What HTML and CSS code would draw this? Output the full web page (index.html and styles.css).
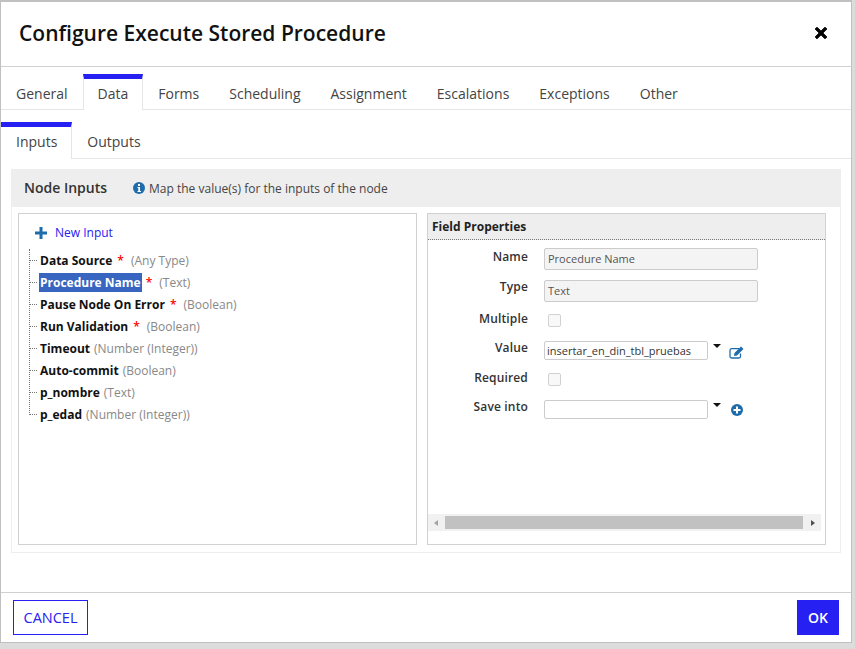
FILE: index.html
```html
<!DOCTYPE html>
<html lang="en">
<head>
<meta charset="utf-8">
<title>Configure Execute Stored Procedure</title>
<link rel="stylesheet" href="styles.css">
</head>
<body>
<div class="dialog">
  <header class="head">
    <h1>Configure Execute Stored Procedure</h1>
    <svg class="close" width="14" height="14" viewBox="0 0 14 14"><path d="M3 1.2 7 5.2 11 1.2 12.8 3 8.8 7 12.8 11 11 12.8 7 8.800 3 12.800 1.200 11 5.200 7 1.200 3Z" fill="#000" stroke="#000" stroke-linejoin="round"/></svg>
  </header>
  <nav class="tabs main">
    <span class="tab">General</span>
    <span class="tab active">Data</span>
    <span class="tab">Forms</span>
    <span class="tab">Scheduling</span>
    <span class="tab">Assignment</span>
    <span class="tab">Escalations</span>
    <span class="tab">Exceptions</span>
    <span class="tab">Other</span>
  </nav>
  <nav class="tabs sub">
    <span class="tab active">Inputs</span>
    <span class="tab">Outputs</span>
  </nav>
  <section class="panel">
    <div class="panel-head">
      <h2>Node Inputs</h2>
      <svg class="info" width="12" height="12" viewBox="0 0 12 12"><circle cx="6" cy="6" r="6" fill="#1f6cab"/><rect x="5" y="2" width="2" height="2" fill="#fff"/><path d="M4.500 5H7V9H8V10H4.500V9H5.300V6H4.500Z" fill="#fff"/></svg>
      <span class="hint">Map the value(s) for the inputs of the node</span>
    </div>
    <div class="panes">
      <div class="tree-pane">
        <div class="new-input">
          <svg width="12" height="12" viewBox="0 0 12 12"><path d="M4.500 0H7.500V4.500H12V7.500H7.500V12H4.500V7.500H0V4.500H4.500Z" fill="#1f6cab"/></svg>
          <a>New Input</a>
        </div>
        <ul class="tree">
          <li><b>Data Source</b><i>*</i><em class="gap">(Any Type)</em></li>
          <li class="selected"><b>Procedure Name</b><i>*</i><em class="gap">(Text)</em></li>
          <li><b>Pause Node On Error</b><i>*</i><em class="gap">(Boolean)</em></li>
          <li><b>Run Validation</b><i>*</i><em class="gap">(Boolean)</em></li>
          <li><b>Timeout</b><em>(Number (Integer))</em></li>
          <li><b>Auto-commit</b><em>(Boolean)</em></li>
          <li><b>p_nombre</b><em>(Text)</em></li>
          <li><b>p_edad</b><em>(Number (Integer))</em></li>
        </ul>
      </div>
      <div class="props">
        <div class="props-head">Field Properties</div>
        <div class="props-body">
          <div class="row r-name"><label>Name</label><div class="field ro">Procedure Name</div></div>
          <div class="row r-type"><label>Type</label><div class="field ro">Text</div></div>
          <div class="row r-multi"><label>Multiple</label><span class="check"></span></div>
          <div class="row r-value"><label>Value</label><div class="field combo">insertar_en_din_tbl_pruebas</div><span class="caret"></span>
            <svg class="edit" width="15" height="13" viewBox="0 0 15 13"><path d="M10 2.700H2.500A1.500 1.500 0 0 0 1 4.200V10.500A1.500 1.500 0 0 0 2.500 12H10A1.500 1.500 0 0 0 11.500 10.500V7.500" fill="none" stroke="#1f6cab" stroke-width="1.300"/><path d="M12 .5 14.500 3 8 9.500 5 10 5.500 7Z" fill="#1f6cab"/></svg>
          </div>
          <div class="row r-req"><label>Required</label><span class="check"></span></div>
          <div class="row r-save"><label>Save into</label><div class="field combo"></div><span class="caret"></span>
            <svg class="add" width="12" height="12" viewBox="0 0 12 12"><circle cx="6" cy="6" r="6" fill="#1f6cab"/><path d="M5 2.500H7V5H9.500V7H7V9.500H5V7H2.500V5H5Z" fill="#fff"/></svg>
          </div>
        </div>
        <div class="hscroll">
          <span class="arrow left"></span>
          <span class="thumb"></span>
          <span class="arrow right"></span>
        </div>
      </div>
    </div>
  </section>
  <footer class="foot">
    <button class="btn cancel">CANCEL</button>
    <button class="btn ok">OK</button>
  </footer>
</div>
</body>
</html>
```
FILE: styles.css
```css
* { box-sizing: border-box; }
html, body { margin: 0; padding: 0; height: 100%; }
body {
  background: #dcdcdc;
  font-family: "Open Sans", sans-serif;
  color: #333;
  overflow: hidden;
}
.dialog {
  width: 852px;
  height: 643px;
  background: #fff;
  border: 1px solid #c0c0c0;
  border-top-width: 2px;
  display: flex;
  flex-direction: column;
}
.head {
  height: 65px;
  flex: none;
  border-bottom: 1px solid #d0d0d0;
  display: flex;
  align-items: center;
  justify-content: space-between;
  padding: 0 23px 3px 18px;
}
.head h1 {
  margin: 0;
  font-size: 21px;
  font-weight: 600;
  color: #111;
}
.tabs {
  display: flex;
  flex: none;
  border-bottom: 1px solid #e6e6e6;
}
.tab {
  font-size: 14px;
  line-height: 20px;
  color: #444;
  padding: 0 15px;
  display: block;
}
.tabs.main { height: 43px; }
.tabs.main .tab { padding-top: 17px; }
.tabs.sub { height: 49px; }
.tabs.sub .tab { padding-top: 22px; }
.tab.active {
  border-right: 1px solid #e6e6e6;
  border-left: 1px solid #e6e6e6;
  border-top: 5px solid #2621f2;
  background: #fff;
  height: calc(100% + 1px - var(--tab-top));
}
.tabs.main .tab.active { --tab-top: 7px; margin-top: 7px; padding: 5px 14px 0 14px; }
.tabs.sub .tab.active { --tab-top: 12px; margin-top: 12px; padding: 5px 14px 0 15px; border-left: 0; }
.panel {
  margin: 10px 10px 0 10px;
  width: 830px;
  height: 384px;
  border: 1px solid #eee;
  border-top: 0;
  flex: none;
  display: flex;
  flex-direction: column;
}
.panel-head {
  height: 38px;
  background: #eee;
  display: flex;
  align-items: center;
  padding-left: 12px;
  flex: none;
}
.panel-head h2 {
  margin: 0 26px 2px 0;
  font-size: 14px;
  font-weight: 600;
  color: #333;
}
.info { margin-right: 4px; }
.hint { font-size: 12px; color: #444; }
.panes {
  display: flex;
  padding: 6px 14px 0 6px;
  gap: 10px;
}
.tree-pane {
  width: 399px;
  height: 332px;
  border: 1px solid #d2d2d2;
  padding: 0 0 0 10px;
}
.new-input {
  display: flex;
  align-items: center;
  height: 35px;
  padding: 2px 0 0 6px;
  gap: 8px;
  font-size: 12px;
}
.new-input a { color: #2621f2; }
.tree {
  list-style: none;
  margin: 0;
  padding: 0;
  border-left: 1px dotted #777;
  height: 166px;
}
.tree li {
  height: 22px;
  font-size: 12px;
  display: flex;
  align-items: center;
  white-space: nowrap;
  padding-left: 9px;
  position: relative;
}
.tree li::before {
  content: "";
  position: absolute;
  left: 0;
  top: 11px;
  width: 7px;
  border-top: 1px dotted #777;
}
.tree b { font-weight: 700; color: #111; padding: 0 1px; line-height: 19px; }
.tree li.selected b { background: #3765c0; color: #fff; }
.tree i { font-style: normal; color: #f00; margin-left: 4px; font-weight: 600; }
.tree em { font-style: normal; color: #888; margin-left: 3px; }
.tree em.gap { margin-left: 7px; }
.props {
  width: 399px;
  height: 332px;
  border: 1px solid #d2d2d2;
  display: flex;
  flex-direction: column;
}
.props-head {
  height: 26px;
  background: #eee;
  border-bottom: 1px dotted #777;
  font-size: 12px;
  font-weight: 700;
  color: #222;
  padding: 0 4px;
  display: flex;
  align-items: center;
  flex: none;
}
.props-body {
  flex: 1;
  padding-top: 8px;
}
.row {
  display: flex;
  align-items: flex-start;
  font-size: 12px;
}
.row label {
  width: 100px;
  text-align: right;
  font-weight: 600;
  letter-spacing: .15px;
  color: #333;
  margin-right: 16px;
  line-height: 18px;
}
.field {
  height: 22px;
  border: 1px solid #ccc;
  border-radius: 2px;
  font-size: 11px;
  line-height: 20px;
  padding: 0 3px;
  color: #555;
}
.field.ro { width: 214px; background: #f4f4f4; }
.field.combo { width: 164px; height: 19px; line-height: 17px; padding: 0 2px; color: #333; background: #fff; }
.r-name { height: 32px; }
.r-type { height: 31px; }
.r-type label { margin-top: -2px; }
.r-multi { height: 30px; }
.r-multi label { margin-top: -1px; }
.r-value { height: 29px; }
.r-value label { margin-top: -2px; }
.r-req { height: 30px; }
.r-req label { margin-top: -1px; }
.r-save label { margin-top: -2px; }
.check {
  width: 13px;
  height: 13px;
  border: 1px solid #d2d2d2;
  border-radius: 2px;
  background: #f8f8f8;
  margin: 3px 0 0 4px;
}
.caret {
  width: 0;
  height: 0;
  border: 4px solid transparent;
  border-top: 4px solid #111;
  border-bottom: 0;
  margin: 3px 0 0 5px;
}
.edit { margin: 5px 0 0 8px; }
.add { margin: 4px 0 0 10px; }
.hscroll {
  height: 17px;
  margin: 0 4px 13px 0;
  background: #f1f1f1;
  display: flex;
  align-items: center;
  flex: none;
}
.thumb { flex: 1; height: 13px; background: #c1c1c1; }
.arrow { width: 0; height: 0; border: 3.5px solid transparent; }
.arrow.left { border-right: 4px solid #a3a3a3; border-left: 0; margin: 0 7px 0 6px; }
.arrow.right { border-left: 4px solid #505050; border-right: 0; margin: 0 6px 0 8px; }
.foot {
  margin-top: auto;
  height: 50px;
  border-top: 1px solid #d0d0d0;
  display: flex;
  justify-content: space-between;
  padding: 7px 12px 0 12px;
  flex: none;
}
.btn {
  height: 35px;
  font-family: "Open Sans", sans-serif;
  font-size: 14.5px;
  font-weight: 400;
  padding: 0;
  border: 1px solid #2621f2;
  border-radius: 0;
}
.cancel { width: 75px; background: #fff; color: #2621f2; }
.ok { width: 42px; background: #2621f2; color: #fff; font-weight: 600; font-size: 14px; }
```
